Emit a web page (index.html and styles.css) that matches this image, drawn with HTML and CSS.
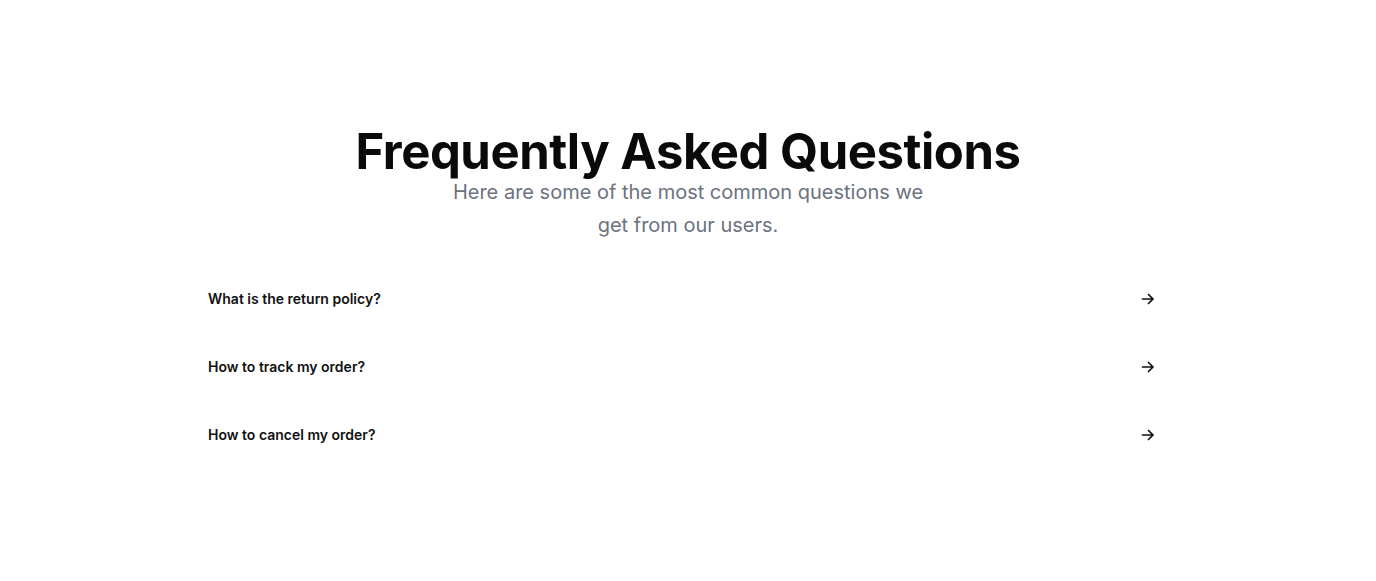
FILE: index.html
```html
<!DOCTYPE html>
<html lang="en">
<head>
<meta charset="utf-8">
<title>FAQ</title>
<link rel="stylesheet" href="styles.css">
</head>
<body>
<section class="faq">
  <header class="faq-head">
    <h1 class="faq-title">Frequently Asked Questions</h1>
    <p class="faq-sub">Here are some of the most common questions we get from our users.</p>
  </header>
  <ul class="faq-list">
    <li class="faq-item"><span class="faq-q">What is the return policy?</span>
      <svg class="faq-arrow" viewBox="0 0 16 16" width="16" height="16"><path d="M2.5 8h10.5M8.5 3.5L13 8l-4.5 4.5" fill="none" stroke="#111" stroke-width="1.7" stroke-linecap="round" stroke-linejoin="round"/></svg></li>
    <li class="faq-item"><span class="faq-q">How to track my order?</span>
      <svg class="faq-arrow" viewBox="0 0 16 16" width="16" height="16"><path d="M2.5 8h10.5M8.5 3.5L13 8l-4.5 4.5" fill="none" stroke="#111" stroke-width="1.7" stroke-linecap="round" stroke-linejoin="round"/></svg></li>
    <li class="faq-item"><span class="faq-q">How to cancel my order?</span>
      <svg class="faq-arrow" viewBox="0 0 16 16" width="16" height="16"><path d="M2.5 8h10.5M8.5 3.5L13 8l-4.5 4.5" fill="none" stroke="#111" stroke-width="1.7" stroke-linecap="round" stroke-linejoin="round"/></svg></li>
  </ul>
</section>
</body>
</html>
```
FILE: styles.css
```css
* { box-sizing: border-box; }
body {
  margin: 0;
  background: #fff;
  font-family: Inter, "Noto Sans", sans-serif;
  color: #0a0a0a;
}
.faq {
  width: 960px;
  margin: 0 auto;
  padding-top: 128px;
}
.faq-head {
  display: flex;
  flex-direction: column;
  align-items: center;
  text-align: center;
}
.faq-title {
  margin: 0;
  font-size: 49px;
  line-height: 48px;
  font-weight: 700;
  letter-spacing: -0.45px;
  color: #0a0a0a;
}
.faq-sub {
  margin: 0;
  max-width: 480px;
  font-size: 20px;
  line-height: 33px;
  color: #6b7280;
}
.faq-list {
  list-style: none;
  margin: 22px 0 0;
  padding: 0;
}
.faq-item {
  display: flex;
  align-items: center;
  justify-content: space-between;
  height: 68px;
  padding: 0 12px 0 0;
}
.faq-q {
  font-size: 14px;
  font-weight: 600;
  color: #111;
}
.faq-arrow {
  display: block;
  margin-top: 2px;
}
```
